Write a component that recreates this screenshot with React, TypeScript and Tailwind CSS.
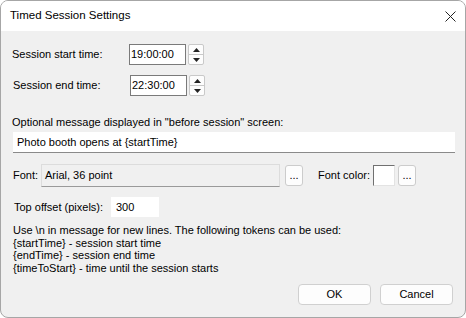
import React from 'react';

const font = { fontFamily: '"Liberation Sans", Arial, sans-serif' };

const Spin: React.FC = () => (
  <div className="ml-[2px] flex h-[21px] w-[16px] flex-col overflow-hidden rounded-[2px] border border-[#c9c9c9] bg-[#fdfdfd]">
    <div className="flex flex-1 items-center justify-center border-b border-[#c9c9c9]">
      <svg width="7" height="4" viewBox="0 0 7 4">
        <path d="M0 4 L3.5 0 L7 4 Z" fill="#222" />
      </svg>
    </div>
    <div className="flex flex-1 items-center justify-center">
      <svg width="7" height="4" viewBox="0 0 7 4">
        <path d="M0 0 L7 0 L3.5 4 Z" fill="#222" />
      </svg>
    </div>
  </div>
);

const TimeRow: React.FC<{ label: string; value: string; className?: string }> = ({ label, value, className }) => (
  <div className={`flex items-center ${className ?? ''}`}>
    <span className="w-[117px] whitespace-nowrap text-[11px] text-black">{label}</span>
    <div className="flex h-[21px] w-[57px] items-center border border-[#7a7a7a] bg-white pl-[1px] text-[11px] text-black">
      {value}
    </div>
    <Spin />
  </div>
);

const DotsButton: React.FC = () => (
  <div className="flex h-[21px] w-[18px] items-end justify-center rounded-[3px] border border-[#cccccc] bg-[#fdfdfd] pb-[4px] text-[11px] leading-none text-black">
    ...
  </div>
);

const App: React.FC = () => {
  return (
    <div style={font} className="h-[318px] w-[466px] overflow-hidden">
      <div className="flex h-[318px] w-[466px] flex-col overflow-hidden rounded-[8px] border border-[#a6a6a6] bg-[#f0f0f0]">
        <div className="flex h-[30px] shrink-0 items-center justify-between bg-white pl-[9px] pr-[9px]">
          <span className="text-[11.5px] text-black">Timed Session Settings</span>
          <svg width="11" height="11" viewBox="0 0 11 11">
            <path d="M0.5 0.5 L10.5 10.5 M10.5 0.5 L0.5 10.5" stroke="#222" strokeWidth="1" />
          </svg>
        </div>

        <div className="flex flex-col whitespace-nowrap pl-[11px] pr-[10px]">
          <TimeRow label="Session start time:" value="19:00:00" className="mt-[13px]" />
          <TimeRow label="Session end time:" value="22:30:00" className="mt-[10px] pl-[1px]" />

          <div className="mt-[19px] text-[11px] leading-[14px] text-black">
            Optional message displayed in "before session" screen:
          </div>
          <div className="mt-[3px] ml-[1px] flex h-[21px] items-center border-b border-[#8a8a8a] bg-white pl-[4px] text-[11px] text-black">
            Photo booth opens at {'{startTime}'}
          </div>

          <div className="mt-[11px] flex items-center">
            <span className="w-[29px] pl-[1px] text-[11px] text-black">Font:</span>
            <div className="flex h-[23px] w-[239px] items-center border border-[#dcdcdc] border-b-[#9a9a9a] bg-[#f0f0f0] pl-[3px] text-[11px] text-black">
              Arial, 36 point
            </div>
            <div className="ml-[5px]">
              <DotsButton />
            </div>
            <span className="ml-[15px] text-[11px] text-black">Font color:</span>
            <div className="ml-[3px] h-[21px] w-[22px] border border-[#e3e3e3] border-t-[#707070] border-l-[#707070] bg-white" />
            <div className="ml-[3px]">
              <DotsButton />
            </div>
          </div>

          <div className="mt-[10px] flex items-center">
            <span className="w-[99px] pl-[2px] text-[11px] text-black">Top offset (pixels):</span>
            <div className="flex h-[20px] w-[48px] items-center bg-white pl-[5px] text-[11px] text-black">300</div>
          </div>

          <div className="mt-[7px] pl-[1px] text-[11px] leading-[12.7px] text-black">
            <div>Use \n in message for new lines. The following tokens can be used:</div>
            <div>{'{startTime}'} - session start time</div>
            <div>{'{endTime}'} - session end time</div>
            <div>{'{timeToStart}'} - time until the session starts</div>
          </div>

          <div className="mt-[9px] flex justify-end gap-[9px] pr-[2px]">
            <div className="flex h-[21px] w-[73px] items-center justify-center rounded-[4px] border border-[#d0d0d0] bg-[#fdfdfd] text-[11px] text-black">
              OK
            </div>
            <div className="flex h-[21px] w-[73px] items-center justify-center rounded-[4px] border border-[#d0d0d0] bg-[#fdfdfd] text-[11px] text-black">
              Cancel
            </div>
          </div>
        </div>
      </div>
    </div>
  );
};

export default App;
